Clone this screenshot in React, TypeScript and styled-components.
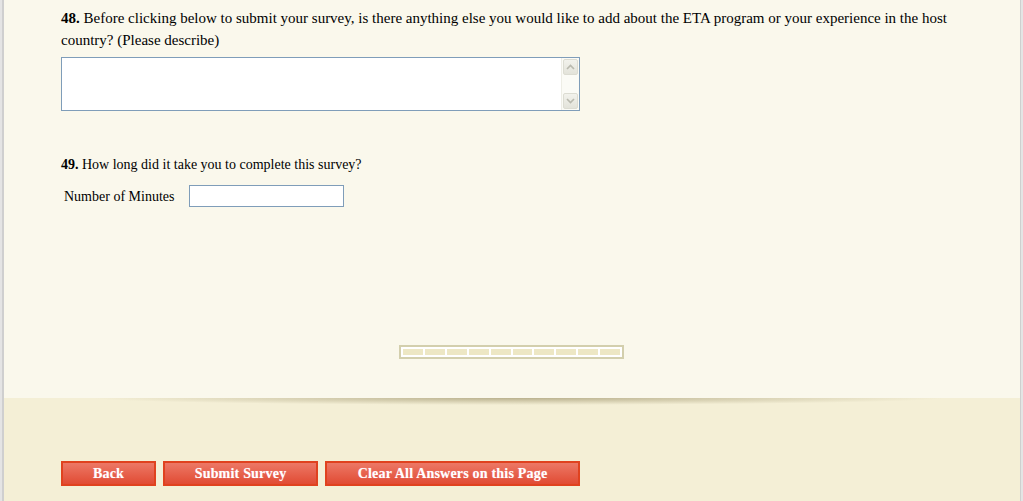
import React from "react";
import styled, { createGlobalStyle } from "styled-components";

const GlobalStyle = createGlobalStyle`
  html, body {
    margin: 0;
    padding: 0;
    background: #ffffff;
  }
  body {
    font-family: "Liberation Serif", "Times New Roman", serif;
    font-size: 14px;
    color: #000;
  }
`;

const Frame = styled.div`
  width: 1023px;
  height: 501px;
  box-sizing: border-box;
  border-left: 2px solid #e4e4e4;
  border-right: 2px solid #e4e4e4;
  display: flex;
  overflow: hidden;
`;

const Inner = styled.div`
  flex: 1;
  border-left: 2px solid #cfcfcf;
  border-right: 1px solid #cfcfcf;
  display: flex;
  flex-direction: column;
`;

const Main = styled.div`
  height: 398px;
  background: #faf8ec;
  box-sizing: border-box;
  padding: 7px 0 0 57px;
  display: flex;
  flex-direction: column;
`;

const Question = styled.div<{ $size?: number }>`
  font-size: ${(p) => p.$size || 14}px;
  line-height: 22px;
  width: 900px;
  b {
    font-weight: bold;
  }
`;

const Box = styled.div`
  margin-top: 6px;
  width: 519px;
  height: 54px;
  box-sizing: border-box;
  border: 1px solid #7f9db9;
  background: #fff;
  display: flex;
  justify-content: flex-end;
`;

const Scroll = styled.div`
  width: 17px;
  background: #fbfbf6;
  border-left: 1px solid #eeeee6;
  display: flex;
  flex-direction: column;
  justify-content: space-between;
`;

const ScrollBtn = styled.div`
  height: 16px;
  margin: 1px;
  border-radius: 2px;
  background: linear-gradient(#f2f2ec, #e3e3da);
  border: 1px solid #dcdcd2;
  box-sizing: border-box;
  display: flex;
  align-items: center;
  justify-content: center;
`;

const Q49 = styled(Question)`
  margin-top: 43px;
`;

const Row = styled.div`
  display: flex;
  align-items: center;
  margin-top: 9px;
  padding-left: 3px;
`;

const Label = styled.span`
  margin-right: 15px;
  padding-top: 1px;
`;

const Input = styled.div`
  width: 155px;
  height: 22px;
  box-sizing: border-box;
  border: 1px solid #7f9db9;
  background: #fff;
`;

const ProgressWrap = styled.div`
  display: flex;
  justify-content: center;
  margin-top: 138px;
  padding-right: 58px;
`;

const Progress = styled.div`
  width: 225px;
  height: 14px;
  box-sizing: border-box;
  border: 2px solid #d3cfad;
  background: #fff;
  padding: 2px;
  display: flex;
  gap: 2px;
`;

const Segment = styled.div`
  flex: 1;
  background: #ede7c4;
`;

const Footer = styled.div`
  flex: 1;
  background: #f4efd6;
  position: relative;
  padding: 63px 0 0 57px;
  display: flex;
  gap: 7px;
  align-items: flex-start;
`;

const Shade = styled.div`
  position: absolute;
  top: 0;
  left: 90px;
  width: 850px;
  height: 7px;
  background: radial-gradient(ellipse 50% 100% at 50% 0%, rgba(160, 150, 110, 0.7), rgba(160, 150, 110, 0) 100%);
`;

const Button = styled.div<{ $w: number }>`
  width: ${(p) => p.$w}px;
  height: 25px;
  box-sizing: border-box;
  border: 2px solid #e0421f;
  background: linear-gradient(#ec7866, #e14b33);
  color: #fff;
  font-weight: bold;
  font-size: 14px;
  display: flex;
  align-items: center;
  justify-content: center;
  text-shadow: 0 0 1px #f3a0a8;
  letter-spacing: 0.2px;
`;

const Chevron = ({ up }: { up?: boolean }) => (
  <svg width="9" height="6" viewBox="0 0 9 6">
    <path
      d={up ? "M1 5 L4.5 1.5 L8 5" : "M1 1 L4.5 4.5 L8 1"}
      fill="none"
      stroke="#b9b9ae"
      strokeWidth="1.6"
    />
  </svg>
);

export default function App() {
  return (
    <>
      <GlobalStyle />
      <Frame>
        <Inner>
          <Main>
            <Question $size={15}>
              <b>48.</b> Before clicking below to submit your survey, is there anything else you
              would like to add about the ETA program or your experience in the host country?
              (Please describe)
            </Question>
            <Box>
              <Scroll>
                <ScrollBtn>
                  <Chevron up />
                </ScrollBtn>
                <ScrollBtn>
                  <Chevron />
                </ScrollBtn>
              </Scroll>
            </Box>
            <Q49>
              <b>49.</b> How long did it take you to complete this survey?
            </Q49>
            <Row>
              <Label>Number of Minutes</Label>
              <Input />
            </Row>
            <ProgressWrap>
              <Progress>
                {Array.from({ length: 10 }).map((_, i) => (
                  <Segment key={i} />
                ))}
              </Progress>
            </ProgressWrap>
          </Main>
          <Footer>
            <Shade />
            <Button $w={95}>Back</Button>
            <Button $w={155}>Submit Survey</Button>
            <Button $w={255}>Clear All Answers on this Page</Button>
          </Footer>
        </Inner>
      </Frame>
    </>
  );
}
